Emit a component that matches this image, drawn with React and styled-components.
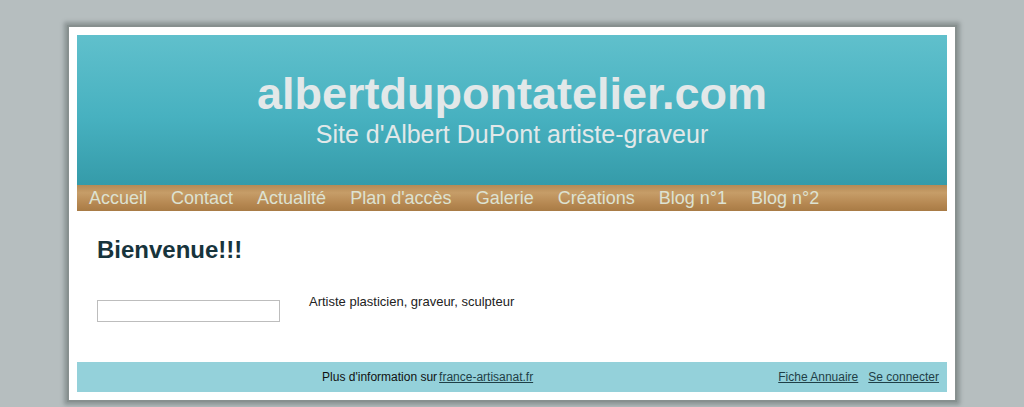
import styled, { createGlobalStyle } from 'styled-components'

const GlobalStyle = createGlobalStyle`
    html, body {
        margin: 0;
        padding: 0;
        background: #b6bebf;
        font-family: "Liberation Sans", Arial, sans-serif;
    }
`

const navItems = ['Accueil', 'Contact', 'Actualité', "Plan d'accès", 'Galerie', 'Créations', 'Blog n°1', 'Blog n°2']

function App () {
    return (
        <>
            <GlobalStyle />
            <Page>
                <Frame>
                    <Header>
                        <Title>albertdupontatelier.com</Title>
                        <Subtitle>Site d'Albert DuPont artiste-graveur</Subtitle>
                    </Header>
                    <Nav>
                        { navItems.map((item) => <NavLink key={ item } href="#">{ item }</NavLink>) }
                    </Nav>
                    <Content>
                        <Heading>Bienvenue!!!</Heading>
                        <Columns>
                            <Side>
                                <SearchBox type="text" />
                            </Side>
                            <Intro>Artiste plasticien, graveur, sculpteur</Intro>
                        </Columns>
                    </Content>
                    <Footer>
                        <FooterInfo>
                            Plus d'information sur<FooterLink href="#">france-artisanat.fr</FooterLink>
                        </FooterInfo>
                        <FooterLinks>
                            <FooterLink href="#">Fiche Annuaire</FooterLink>
                            <FooterLink href="#">Se connecter</FooterLink>
                        </FooterLinks>
                    </Footer>
                </Frame>
            </Page>
        </>
    )
}

const Page = styled.div`
    padding-top: 27px;
    height: 380px;
`

const Frame = styled.div`
    width: 870px;
    margin: 0 auto;
    padding: 8px;
    background: #fff;
    box-shadow: 0 0 0 2px #87908f, 0 0 4px 5px #8c9595;
`

const Header = styled.header`
    height: 150px;
    box-sizing: border-box;
    padding-top: 34px;
    background: linear-gradient(to bottom, #60c0cc 0%, #47b1c0 55%, #359ba9 100%);
    text-align: center;
    color: #e2e8e9;
`

const Title = styled.h1`
    margin: 0;
    font-size: 45px;
    line-height: 50px;
    font-weight: bold;
`

const Subtitle = styled.p`
    margin: 0;
    font-size: 25px;
    line-height: 30px;
`

const Nav = styled.nav`
    display: flex;
    height: 26px;
    align-items: center;
    background: linear-gradient(to bottom, #b58a55 0%, #c69d68 30%, #b48650 75%, #a87b45 100%);
`

const NavLink = styled.a`
    padding: 0 12px;
    font-size: 18px;
    color: #dde2d2;
    text-decoration: none;
`

const Content = styled.main`
    height: 151px;
    box-sizing: border-box;
    padding: 24px 20px 0;
`

const Heading = styled.h2`
    margin: 0;
    font-size: 24px;
    line-height: 30px;
    color: #17343c;
`

const Columns = styled.div`
    display: flex;
    gap: 29px;
    margin-top: 25px;
`

const Side = styled.div`
    padding-top: 10px;
`

const SearchBox = styled.input`
    display: block;
    width: 183px;
    height: 22px;
    box-sizing: border-box;
    border: 1px solid #bdbdbd;
    margin: 0;
    padding: 2px 4px;
`

const Intro = styled.p`
    margin: 0;
    padding-top: 4px;
    font-size: 13px;
    line-height: 15px;
    color: #222;
`

const Footer = styled.footer`
    display: flex;
    align-items: center;
    height: 30px;
    background: #94d1da;
    font-size: 12px;
    color: #111;
`

const FooterInfo = styled.div`
    flex: 1;
    text-align: center;

    a {
        margin-left: 2px;
    }
`

const FooterLinks = styled.div`
    display: flex;
    gap: 10px;
    padding-right: 8px;
`

const FooterLink = styled.a`
    color: #1f3f47;
    text-decoration: underline;
`

export default App
